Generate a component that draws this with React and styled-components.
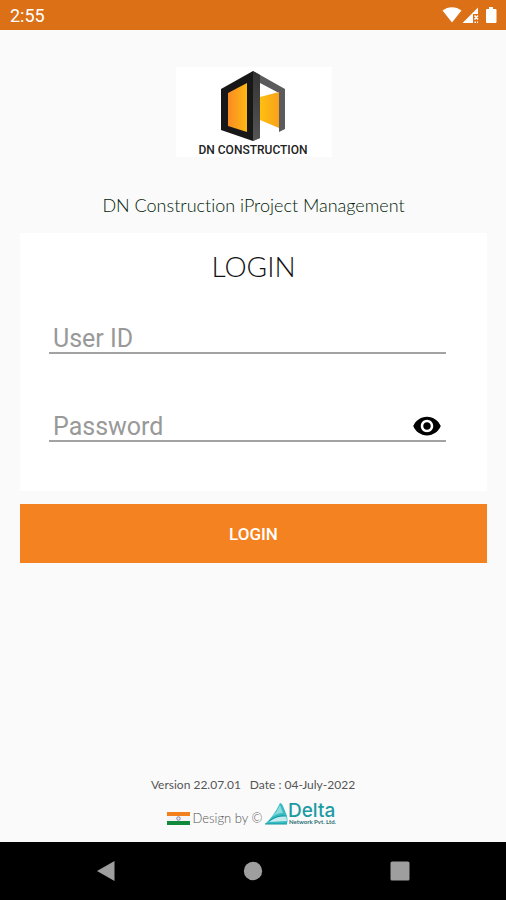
import React, { useState } from "react";
import styled, { createGlobalStyle } from "styled-components";

const App = () => {
  const [userId, setUserId] = useState("");
  const [password, setPassword] = useState("");
  const [showPassword, setShowPassword] = useState(false);

  const submitHandler = (e) => {
    e.preventDefault();
  };

  return (
    <>
      <GlobalStyle />
      <Page>
        <StatusBar>
          <span>2:55</span>
          <StatusIcons />
        </StatusBar>
        <Main>
          <LogoBox>
            <DnLogo />
          </LogoBox>
          <AppTitle>DN Construction iProject Management</AppTitle>
          <form onSubmit={submitHandler}>
            <Card>
              <h2>LOGIN</h2>
              <Field>
                <input
                  type="text"
                  aria-label="User ID"
                  placeholder="User ID"
                  value={userId}
                  onChange={(e) => setUserId(e.target.value)}
                />
              </Field>
              <Field>
                <input
                  type={showPassword ? "text" : "password"}
                  aria-label="Password"
                  placeholder="Password"
                  value={password}
                  onChange={(e) => setPassword(e.target.value)}
                />
                <EyeButton
                  type="button"
                  aria-label="Show password"
                  onClick={() => setShowPassword(!showPassword)}
                >
                  <svg width="30" height="30" viewBox="0 0 24 24">
                    <path d="M12 4.5C7 4.5 2.73 7.61 1 12c1.73 4.39 6 7.5 11 7.5s9.27-3.11 11-7.5c-1.73-4.39-6-7.5-11-7.5zM12 17c-2.76 0-5-2.24-5-5s2.24-5 5-5 5 2.24 5 5-2.24 5-5 5zm0-8c-1.66 0-3 1.34-3 3s1.34 3 3 3 3-1.34 3-3-1.34-3-3-3z" />
                  </svg>
                </EyeButton>
              </Field>
            </Card>
            <LoginButton type="submit">LOGIN</LoginButton>
          </form>
        </Main>
        <Footer>
          <Version>
            <span>Version 22.07.01</span>
            <span>Date : 04-July-2022</span>
          </Version>
          <Credit>
            <Flag />
            <span>Design by ©</span>
            <DeltaLogo />
          </Credit>
        </Footer>
        <NavBar>
          <button type="button" aria-label="Back">
            <svg width="20" height="22" viewBox="0 0 20 22">
              <path d="M18.5 1v20L1 11z" />
            </svg>
          </button>
          <button type="button" aria-label="Home">
            <svg width="20" height="20" viewBox="0 0 20 20">
              <circle cx="10" cy="10" r="9.2" />
            </svg>
          </button>
          <button type="button" aria-label="Recent apps">
            <svg width="20" height="20" viewBox="0 0 20 20">
              <rect x="0.5" y="0.5" width="19" height="19" rx="1.5" />
            </svg>
          </button>
        </NavBar>
      </Page>
    </>
  );
};

export default App;

const StatusIcons = () => (
  <svg width="56" height="18" viewBox="0 0 56 18" fill="#fff">
    <path d="M0.5 4.5C6 0 14 0 19.5 4.5L10 16.5z" />
    <path d="M20.500 17L36 1.500V8H31v9z" />
    <path d="M32.500 9.500l3.500 4M36 9.500l-3.500 4M32.500 16.200h1.500M35 16.200h1" stroke="#fff" strokeWidth="1.500" />
    <path d="M47 1h4v2h2.500q1 0 1 1v12q0 1-1 1h-8.500q-1 0-1-1V4q0-1 1-1H47z" />
  </svg>
);

const DnLogo = () => (
  <svg width="156" height="90" viewBox="0 0 156 90">
    <defs>
      <linearGradient id="panel" x1="0" y1="0" x2="1" y2="0">
        <stop offset="0" stopColor="#fb8b24" />
        <stop offset="1" stopColor="#fdb913" />
      </linearGradient>
      <linearGradient id="door" x1="0" y1="0" x2="1" y2="0">
        <stop offset="0" stopColor="#fec010" />
        <stop offset="1" stopColor="#f9a11c" />
      </linearGradient>
      <linearGradient id="post" x1="0" y1="0" x2="0" y2="1">
        <stop offset="0" stopColor="#333" />
        <stop offset="1" stopColor="#555" />
      </linearGradient>
    </defs>
    <path d="M45 22L77 4v70L45 63z" fill="#171717" />
    <path d="M52 26l19-10v49l-19-6z" fill="url(#panel)" />
    <path d="M77 4l32 18v40l-6 3V26L84 16v55l-7 3z" fill="#5b5b5d" />
    <path d="M77 4l7 4v63l-7 3z" fill="url(#post)" />
    <path d="M84 30l19-5v36l-19-8z" fill="url(#door)" />
    <LogoName x="77" y="87" textAnchor="middle">
      DN CONSTRUCTION
    </LogoName>
  </svg>
);

const Flag = () => (
  <svg width="23" height="14" viewBox="0 0 23 14">
    <rect width="23" height="4" fill="#f2811d" />
    <rect y="4" width="23" height="5" fill="#f4f4f4" />
    <rect y="9" width="23" height="4" fill="#12893b" />
    <circle cx="11.500" cy="6.500" r="1.700" fill="none" stroke="#7779a8" />
  </svg>
);

const DeltaLogo = () => (
  <svg width="74" height="27" viewBox="0 0 74 27">
    <path d="M0 25Q9 17 15 4q2 0 3 3l4 10q1 5 0 8z" fill="#35bcc3" />
    <path d="M7 18q5-5 8-12l3 8q-6 0-11 4z" fill="#8fdadd" />
    <path d="M4 23q7-6 17-6l1 5z" fill="#c5ecee" />
    <path d="M0 25h22M4 22q8-6 17-5" stroke="#1697a1" fill="none" />
    <DeltaName x="23" y="18">
      Delta
    </DeltaName>
    <DeltaTag x="24" y="25">
      Network Pvt. Ltd.
    </DeltaTag>
  </svg>
);

const GlobalStyle = createGlobalStyle`
  * {
    box-sizing: border-box;
  }
  body {
    margin: 0;
    background-color: #fafafa;
    font-family: Lato, sans-serif;
    font-variant-ligatures: none;
  }
  svg {
    display: block;
  }
`;

const Page = styled.div`
  min-height: 100vh;
  display: flex;
  flex-direction: column;
`;

const StatusBar = styled.header`
  height: 30px;
  padding: 0 8px 0 10px;
  display: flex;
  justify-content: space-between;
  align-items: center;
  background-color: #db7017;
  color: #fff;
  font-family: Roboto, sans-serif;
  font-size: 18px;
`;

const Main = styled.main`
  flex: 1;
  padding: 37px 19px 0 20px;
`;

const LogoBox = styled.div`
  width: 156px;
  height: 90px;
  margin: 0 auto;
  background-color: #fff;
`;

const AppTitle = styled.h1`
  margin: 36px 0 16px 0;
  color: #001a08;
  font-size: 18px;
  font-weight: 300;
  line-height: 24px;
  text-align: center;
`;

const Card = styled.section`
  padding: 17px 41px 49px 29px;
  background-color: #fff;
  h2 {
    margin: 0 0 32px 12px;
    color: #111;
    font-size: 28px;
    font-weight: 300;
    line-height: 32px;
    text-align: center;
  }
`;

const Field = styled.div`
  display: flex;
  align-items: center;
  height: 40px;
  border-bottom: 2px solid #a3a3a3;
  & + & {
    margin-top: 48px;
  }
  input {
    flex: 1;
    min-width: 0;
    height: 38px;
    padding: 10px 4px 0 4px;
    border: 0;
    outline: 0;
    background: none;
    color: #222;
    font-family: Roboto, sans-serif;
    font-size: 25px;
  }
  input::placeholder {
    color: #999;
    opacity: 1;
  }
`;

const EyeButton = styled.button`
  margin: 10px 4px 0 0;
  padding: 0;
  border: 0;
  background: none;
  cursor: pointer;
`;

const LoginButton = styled.button`
  width: 100%;
  height: 59px;
  margin-top: 13px;
  border: 0;
  background-color: #f58220;
  color: #fff;
  font-family: Roboto, sans-serif;
  font-size: 17px;
  font-weight: 500;
  cursor: pointer;
`;

const Footer = styled.footer`
  padding: 24px 0 16px 0;
  display: flex;
  flex-direction: column;
  align-items: center;
  gap: 6px;
  color: #555;
`;

const Version = styled.div`
  display: flex;
  gap: 9px;
  font-size: 12px;
  line-height: 16px;
`;

const Credit = styled.div`
  display: flex;
  align-items: flex-end;
  gap: 3px;
  font-size: 13px;
  font-weight: 300;
  line-height: 16px;
`;

const NavBar = styled.nav`
  height: 58px;
  padding: 0 33px;
  display: grid;
  grid-template-columns: repeat(3, 1fr);
  align-items: center;
  justify-items: center;
  background-color: #000;
  button {
    padding: 0;
    border: 0;
    background: none;
    fill: #9e9e9e;
  }
`;

const LogoName = styled.text`
  fill: #222;
  font-family: Roboto, sans-serif;
  font-size: 12px;
  font-weight: 500;
`;

const DeltaName = styled.text`
  fill: #1d9aa3;
  font-family: Inter, sans-serif;
  font-size: 19px;
  font-weight: 500;
`;

const DeltaTag = styled.text`
  fill: #1f6d74;
  font-family: Lato, sans-serif;
  font-size: 6px;
  font-weight: 700;
`;
